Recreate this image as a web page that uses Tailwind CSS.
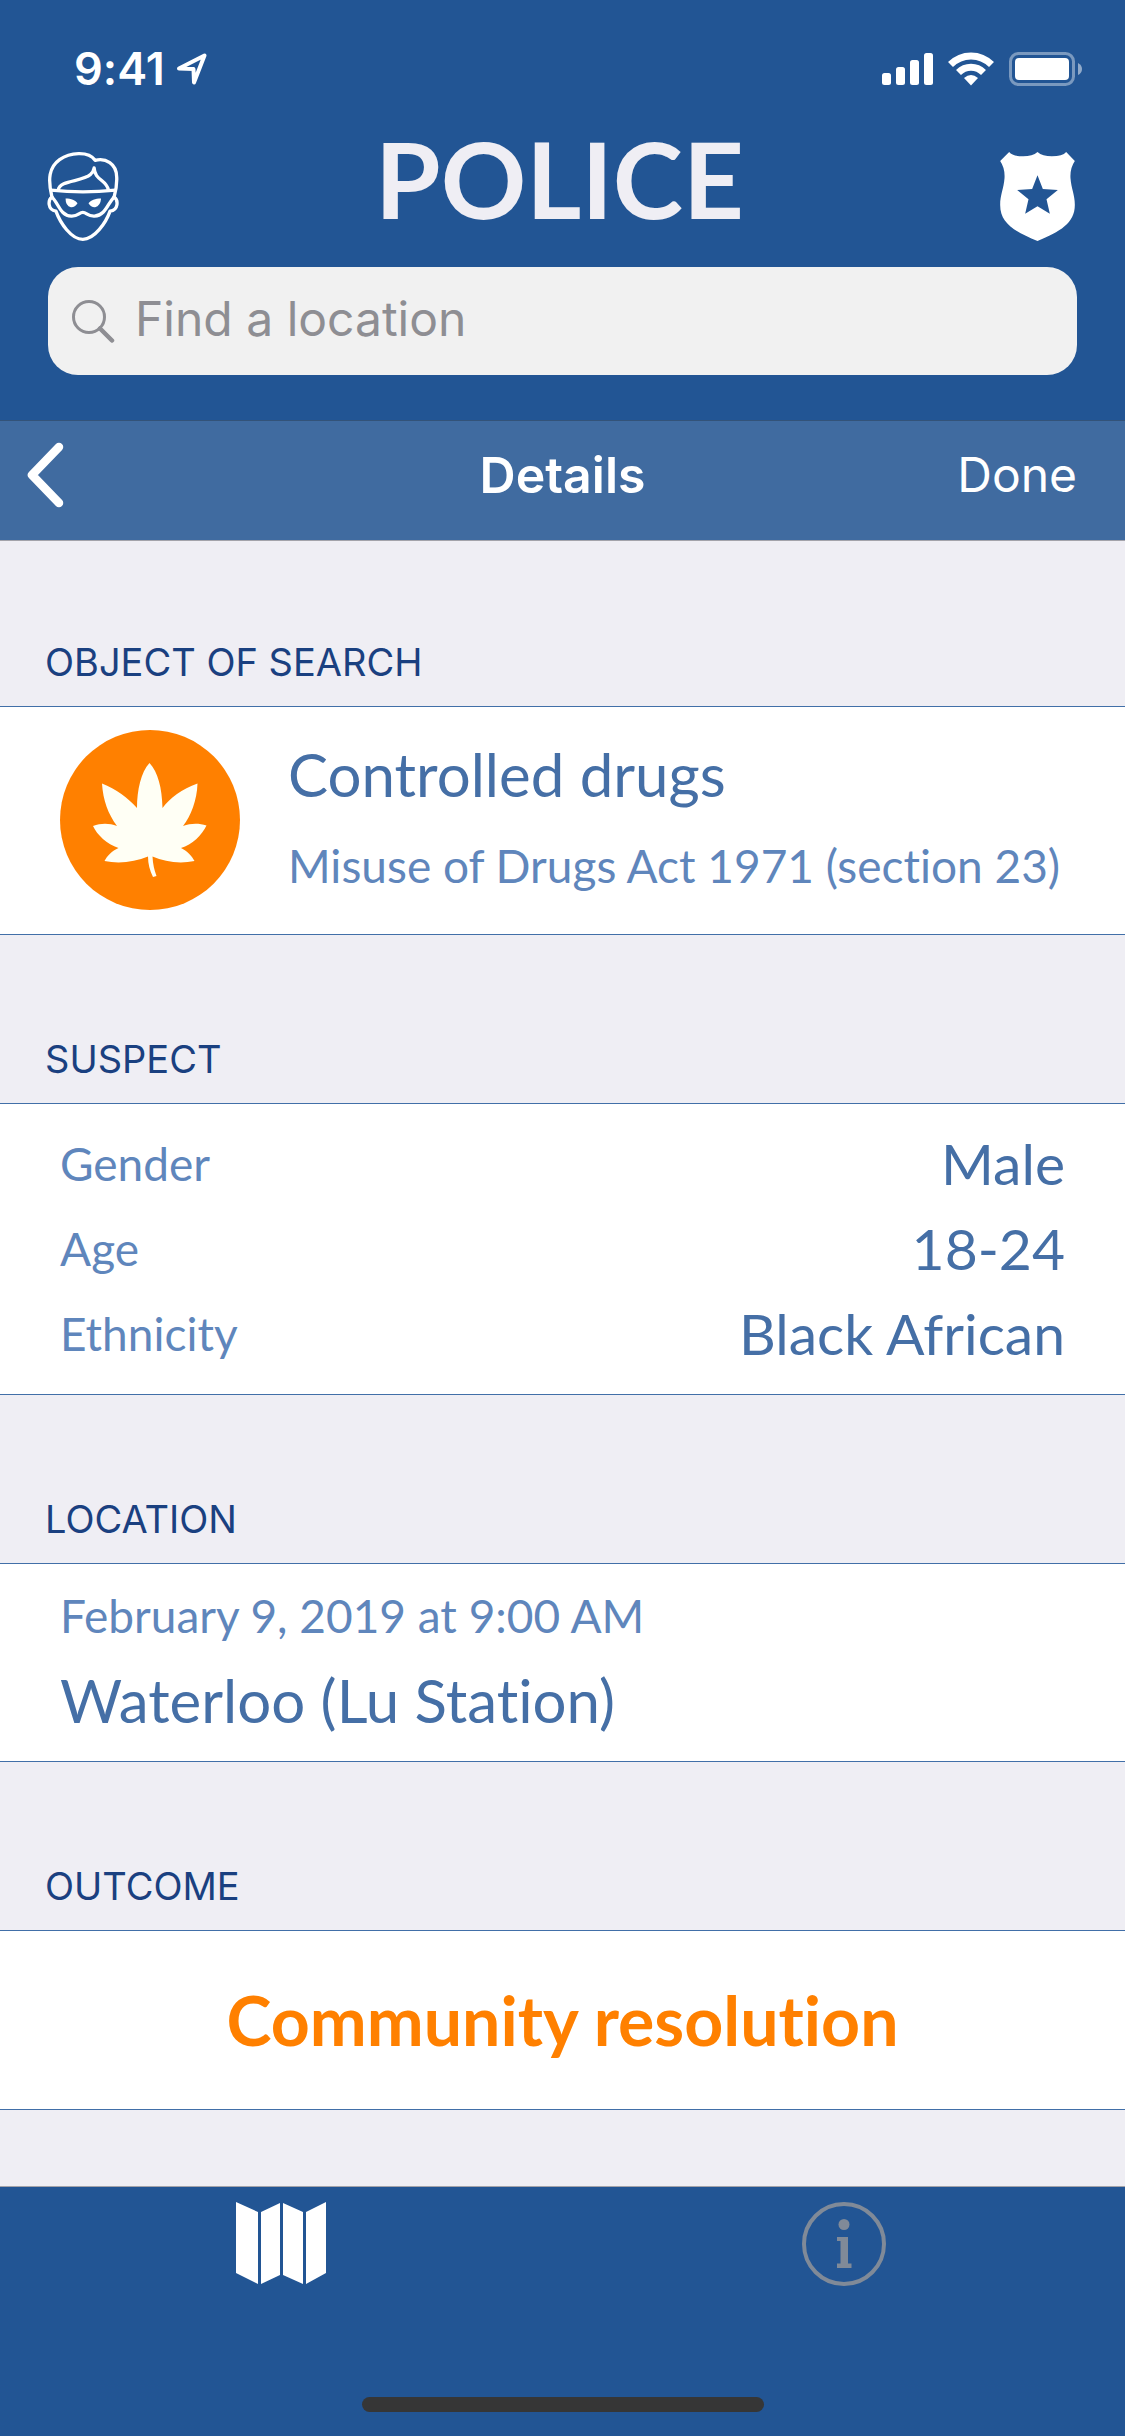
<!DOCTYPE html>
<html lang="en">
<head>
<meta charset="utf-8">
<meta name="viewport" content="width=device-width, initial-scale=1">
<title>Police – Details</title>
<script src="https://cdn.jsdelivr.net/npm/@tailwindcss/browser@4"></script>
</head>
<body class="flex min-h-screen flex-col bg-[#efeef4] font-['Inter',sans-serif] [font-variant-ligatures:none]">

<header class="bg-[#225594] pb-[45px] text-white">
  <!-- Status bar -->
  <div class="flex h-[138px] items-center justify-between pr-[42px] pl-[74px]">
    <div class="flex items-center gap-3">
      <span class="text-[45px] leading-[48px] font-semibold">9:41</span>
      <svg class="h-[32px] w-[30px]" viewBox="0 0 30 32" fill="none" stroke="white" stroke-width="4" stroke-linejoin="round" aria-hidden="true"><path d="M2 15.500L27.500 2.500 17 29.500 16.500 16Z"/></svg>
    </div>
    <div class="flex items-center gap-[15px]" aria-hidden="true">
      <svg class="h-[34px] w-[51px]" viewBox="0 0 51 34" fill="white"><rect y="21" width="9" height="12" rx="2.500"/><rect x="14" y="15" width="9" height="18" rx="2.500"/><rect x="28" y="8" width="9" height="25" rx="2.500"/><rect x="42" y="1" width="9" height="32" rx="2.500"/></svg>
      <svg class="h-[34px] w-[46px]" viewBox="0 0 46 34" fill="none" stroke="white"><path stroke-width="7" d="M2.500 12.500C14 1 32 1 43.500 12.500"/><path stroke-width="7" d="M10.500 20.500C17.500 13.500 28.500 13.500 35.500 20.500"/><path fill="white" stroke="none" d="M16 26Q23 20 30 26L23 33.500Z"/></svg>
      <svg class="h-[34px] w-[74px]" viewBox="0 0 74 34"><rect x="1.500" y="1.500" width="63" height="31" rx="8" fill="none" stroke="white" stroke-opacity=".4" stroke-width="3"/><rect x="6" y="6" width="54" height="22" rx="4" fill="white"/><path d="M69 11Q73 13 73 17T69 23Z" fill="white" fill-opacity=".5"/></svg>
    </div>
  </div>

  <!-- App title -->
  <div class="flex h-[103px] items-end justify-between pr-[50px] pl-[47px]">
    <button type="button" aria-label="Stop and search">
      <svg class="block h-[90px] w-[72px]" viewBox="53 33 215 271" fill="none" stroke="white" stroke-width="10" stroke-linejoin="round" stroke-linecap="round">
        <path d="M67 172C54 118 58 82 90 59C120 38 176 31 197 61C228 53 262 70 262 112C263 135 260 152 254 172"/>
        <path d="M67 172C55 180 53 210 79 214C92 250 125 299 160 299C195 299 229 250 242 214C268 210 267 180 254 172"/>
        <path d="M64 151Q160 161 258 151"/>
        <path d="M86 150C90 120 158 126 183 104Q192 96 194 84C196 122 230 118 237 150"/>
        <path d="M69 174C87 192 93 228 125 229C147 230 148 218 160 218C172 218 173 230 195 229C227 228 235 192 252 174"/>
        <path fill="white" stroke="none" d="M108 176C125 176 138 182 144 190Q136 203 124 202Q108 199 108 176ZM215 176C197 176 184 182 177 190Q185 203 197 202Q213 199 215 176Z"/>
      </svg>
    </button>
    <h1 class="self-start font-['Lato',sans-serif] text-[106px] leading-[80px] font-bold text-[#efeef4]">POLICE</h1>
    <button type="button" aria-label="Police force">
      <svg class="block h-[89px] w-[75px]" viewBox="61 36 224 267" fill="white"><path fill-rule="evenodd" d="M88 36Q98 49 130 49Q158 49 173 36Q188 49 216 49Q248 49 259 36L285 63Q270 85 272 115C274 145 285 165 285 195C285 250 240 275 173 303C105 275 61 250 61 195C61 165 72 145 74 115Q76 85 61 63ZM173 106L189 147L234 150L200 178L210 221L173 199L136 221L146 178L112 150L157 147Z"/></svg>
    </button>
  </div>

  <label class="mx-12 mt-[26px] flex h-[108px] items-center gap-5 rounded-[30px] bg-[#f1f1f1] px-6">
    <svg class="h-[43px] w-[43px] shrink-0" viewBox="0 0 43 43" fill="none" stroke="#8e8e93" aria-hidden="true"><circle cx="17" cy="17" r="15.500" stroke-width="3"/><path d="M28 28.500L40 40.500" stroke-width="4.500" stroke-linecap="round"/></svg>
    <input type="search" placeholder="Find a location" aria-label="Find a location" class="w-full min-w-0 bg-transparent pb-1 text-[48px] leading-[60px] text-[#333] outline-none placeholder:text-[#8e8e93]">
  </label>
</header>

<nav class="grid h-[121px] grid-cols-[1fr_auto_1fr] items-center border-y border-t-[#335379] border-b-[#a3a3aa] bg-[#406ba0] px-[26px] pb-3 text-white">
  <button type="button" aria-label="Back" class="justify-self-start">
    <svg class="block h-[66px] w-[38px]" viewBox="0 0 38 66" fill="none" stroke="white" stroke-width="8.500" stroke-linecap="round" stroke-linejoin="round"><path d="M33 5L6 33 33 61"/></svg>
  </button>
  <h2 class="text-[50px] leading-[60px] font-semibold">Details</h2>
  <button type="button" class="justify-self-end pr-[22px] text-[48px] leading-[60px]">Done</button>
</nav>

<main class="flex-1">
  <section>
    <h3 class="flex h-[165px] items-end px-[45px] pb-5 text-[38px] leading-[48px] text-[#1a4080]">OBJECT OF SEARCH</h3>
    <div class="flex gap-[48px] border-y border-[#416fa8] bg-white pt-[23px] pr-8 pb-6 pl-[60px] font-['Lato',sans-serif]">
      <svg class="h-[180px] w-[180px] shrink-0" viewBox="0 0 180 180" aria-hidden="true"><circle cx="90" cy="90" r="90" fill="#ff8000"/><path fill="#fffff5" d="M89.500 33C98 42 102 58 102.500 78C110 68 122 59 137.500 53.500C137 70 131 86 123 96C131 93 139 93 146.500 95.500C142 105 132 115 121 118C127 121 132 126 134.500 131C120 134 105 132 92.500 126.500Q93 137 96.500 146L93 147Q88 137 88 126.500C75 132 59 134 44.500 131C47 126 52 121 58.500 118C47 114 37 105 33 96C41 93 49 93 57 96C48 84 43 70 42 53.500C56 59 68 68 77 78C77 60 81 42 89.500 33Z"/></svg>
      <div class="flex flex-col gap-3">
        <p class="text-[60px] leading-[88px] text-[#456fa6]">Controlled drugs</p>
        <p class="text-[46px] leading-[72px] text-[#5f86bc]">Misuse of Drugs Act 1971 (section 23)</p>
      </div>
    </div>
  </section>

  <section>
    <h3 class="flex h-[168px] items-end px-[45px] pb-5 text-[38px] leading-[48px] text-[#1a4080]">SUSPECT</h3>
    <dl class="border-y border-[#416fa8] bg-white px-[60px] pt-[17px] pb-[18px] font-['Lato',sans-serif] leading-[85px]">
      <div class="flex justify-between"><dt class="text-[46px] text-[#5f86bc]">Gender</dt><dd class="text-[57px] text-[#456fa6]">Male</dd></div>
      <div class="flex justify-between"><dt class="text-[46px] text-[#5f86bc]">Age</dt><dd class="text-[57px] text-[#456fa6]">18-24</dd></div>
      <div class="flex justify-between"><dt class="text-[46px] text-[#5f86bc]">Ethnicity</dt><dd class="text-[57px] text-[#456fa6]">Black African</dd></div>
    </dl>
  </section>

  <section>
    <h3 class="flex h-[168px] items-end px-[45px] pb-5 text-[38px] leading-[48px] text-[#1a4080]">LOCATION</h3>
    <div class="border-y border-[#416fa8] bg-white px-[60px] pt-[9px] pb-[18px] font-['Lato',sans-serif]">
      <p class="text-[46px] leading-[85px] text-[#5f86bc]">February 9, 2019 at 9:00 AM</p>
      <p class="text-[60px] leading-[85px] text-[#456fa6]">Waterloo (Lu Station)</p>
    </div>
  </section>

  <section>
    <h3 class="flex h-[168px] items-end px-[45px] pb-5 text-[38px] leading-[48px] text-[#1a4080]">OUTCOME</h3>
    <p class="border-y border-[#416fa8] bg-white py-12 text-center font-['Lato',sans-serif] text-[68px] leading-[82px] font-bold text-[#ff8000]">Community resolution</p>
  </section>
</main>

<footer class="flex h-[250px] flex-col justify-between border-t border-[#a3a3aa] bg-[#225594] pt-[15px] pb-6">
  <div class="grid grid-cols-2 justify-items-center">
    <button type="button" aria-label="Map"><svg class="block h-[84px] w-[90px]" viewBox="0 0 90 84" fill="white"><path d="M0 0L22 10V82L0 71ZM25 10L44 1V73L25 82ZM47 1L67 10V82L47 73ZM70 10L90 0V71L70 82Z"/></svg></button>
    <button type="button" aria-label="Information"><svg class="block h-[84px] w-[84px]" viewBox="0 0 84 84" fill="#808a98"><circle cx="42" cy="42" r="40" fill="none" stroke="#808a98" stroke-width="4"/><circle cx="42" cy="22.500" r="5.500"/><path d="M35 35H46V61.500H49.500V66H35V61.500H38.500V39H35Z"/></svg></button>
  </div>
  <div class="h-[15px] w-[402px] self-center rounded-full bg-[#363636]"></div>
</footer>
</body>
</html>
